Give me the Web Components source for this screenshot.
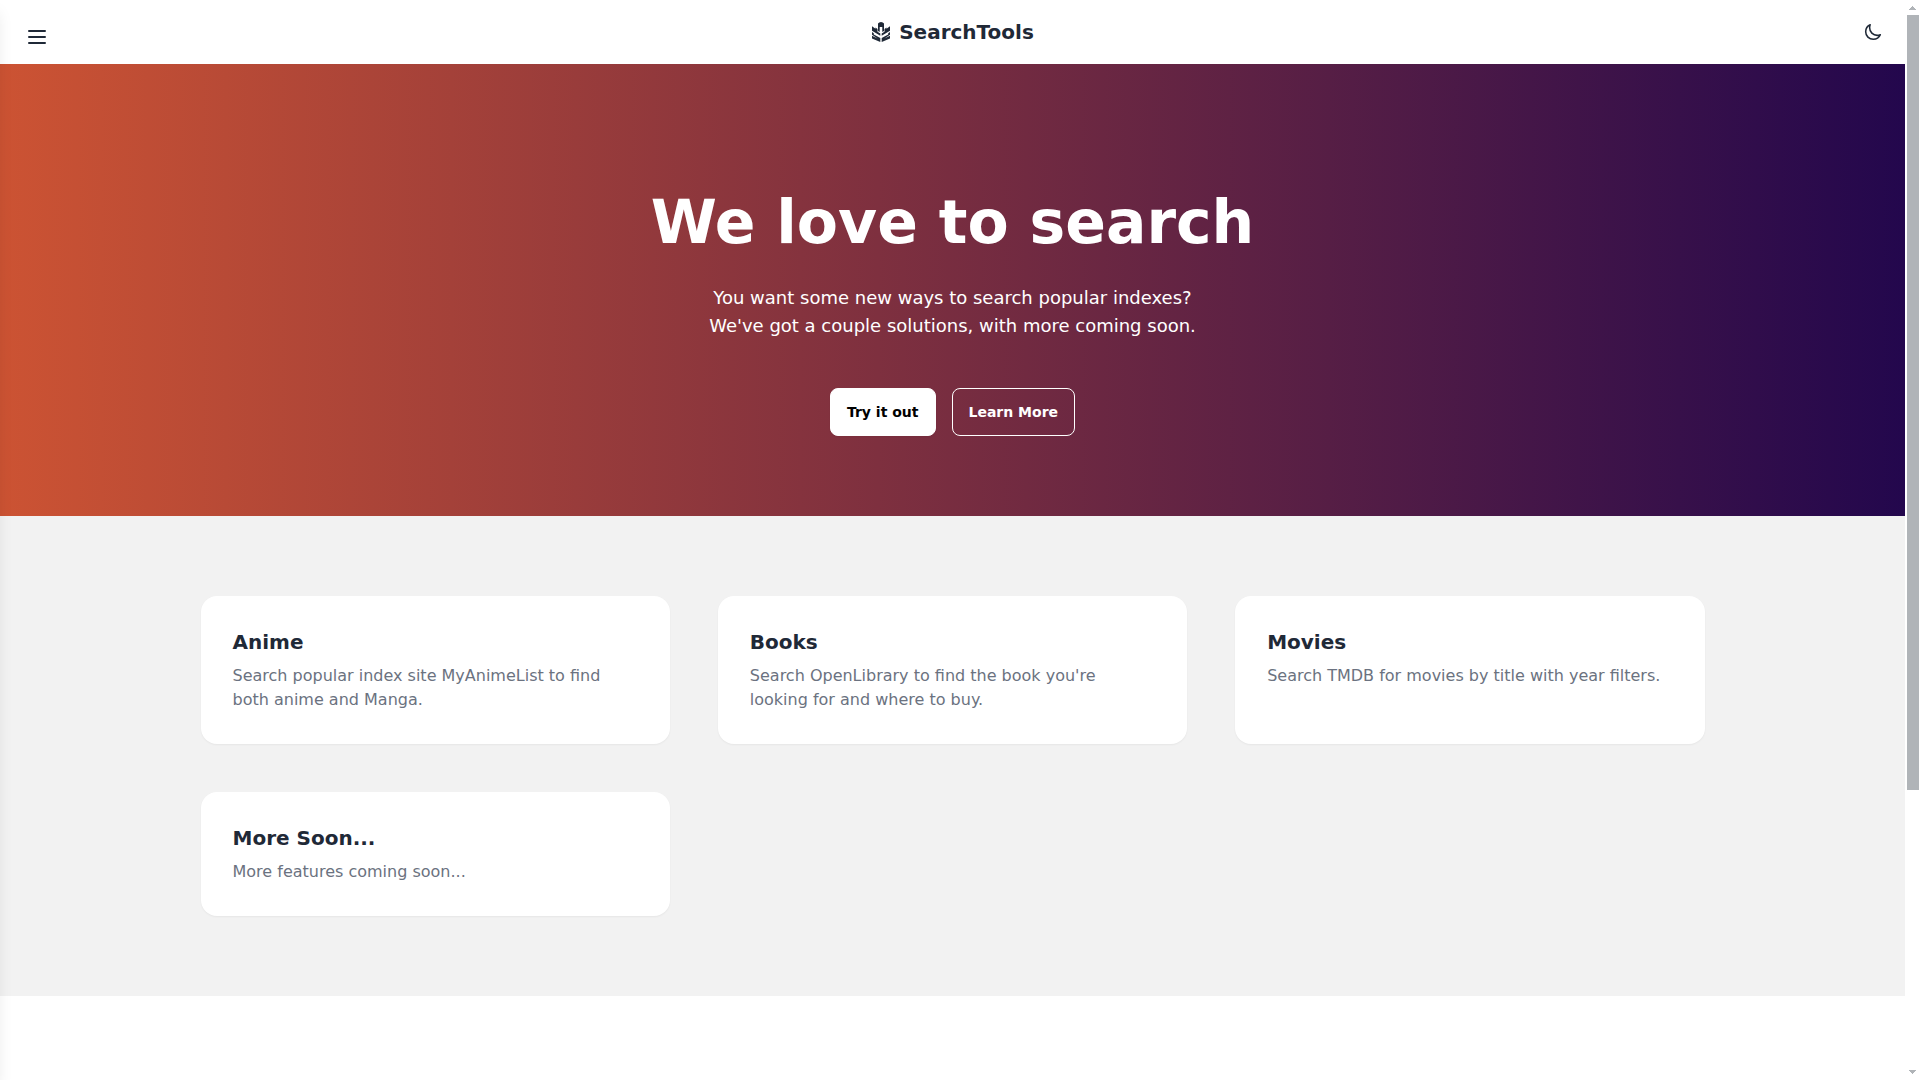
<!DOCTYPE html>
<html lang="en">
<head>
  <meta charset="utf-8">
  <title>SearchTools</title>
  <style>
    html {
      scrollbar-width: none;
    }

    body {
      margin: 0;
      background: #fff;
      color: #1f2937;
      font-family: "DejaVu Sans", sans-serif;
      font-size: 16px;
      line-height: 24px;
    }
  </style>
</head>
<body>
  <app-shell>
    <site-header>SearchTools</site-header>
    <main>
      <hero-banner>
        <span slot="title">We love to search</span>
        <span slot="lead">You want some new ways to search popular indexes?<br>We've got a couple solutions, with more coming soon.</span>
        <link-button slot="actions" href="#try" variant="solid">Try it out</link-button>
        <link-button slot="actions" href="#more">Learn More</link-button>
      </hero-banner>
      <feature-grid>
        <feature-card heading="Anime">Search popular index site MyAnimeList to find both anime and Manga.</feature-card>
        <feature-card heading="Books">Search OpenLibrary to find the book you're looking for and where to buy.</feature-card>
        <feature-card heading="Movies">Search TMDB for movies by title with year filters.</feature-card>
        <feature-card heading="More Soon...">More features coming soon...</feature-card>
      </feature-grid>
    </main>
  </app-shell>

  <script>
    class AppShell extends HTMLElement {
      connectedCallback() {
        this.attachShadow({ mode: 'open' });
        this.shadowRoot.innerHTML = `
          <style>
            :host {
              display: grid;
              grid-template-columns: minmax(0, 1fr) 15px;
              height: 100vh;
              overflow: hidden;
            }

            .page {
              overflow: hidden;
            }

            /* closed drawer, only its shadow reaches the page */
            .drawer {
              position: fixed;
              top: 0;
              bottom: 0;
              left: -256px;
              width: 256px;
              box-shadow: 0 10px 15px -3px rgba(0, 0, 0, 0.1), 0 4px 6px -4px rgba(0, 0, 0, 0.1);
              pointer-events: none;
            }
          </style>
          <div class="page"><slot></slot></div>
          <scroll-rail></scroll-rail>
          <div class="drawer"></div>
        `;
      }
    }

    class ScrollRail extends HTMLElement {
      connectedCallback() {
        this.attachShadow({ mode: 'open' });
        this.shadowRoot.innerHTML = `
          <style>
            :host {
              display: grid;
              grid-template-rows: 15px minmax(0, 1fr) 15px;
              padding: 0 1px 0 2px;
              box-sizing: border-box;
              background: #fff;
            }

            .thumb {
              height: 73.8%;
              background: #b0b4b8;
            }

            svg {
              display: block;
              width: 12px;
              height: 15px;
              fill: #b0b4b8;
            }
          </style>
          <svg viewBox="0 0 12 15"><path d="M5 6h1v1h1v1h1v1h1v1H2V9h1V8h1V7h1z"/></svg>
          <div><div class="thumb"></div></div>
          <svg viewBox="0 0 12 15"><path d="M2 5h7v1H8v1H7v1H6v1H5V8H4V7H3V6H2z"/></svg>
        `;
      }
    }

    class SiteHeader extends HTMLElement {
      connectedCallback() {
        this.attachShadow({ mode: 'open' });
        this.shadowRoot.innerHTML = `
          <style>
            :host {
              display: block;
            }

            header {
              display: grid;
              grid-template-columns: 1fr auto 1fr;
              align-items: center;
              height: 64px;
              padding: 0 8px;
              box-sizing: border-box;
              background: #fff;
            }

            button {
              display: flex;
              align-items: center;
              justify-content: center;
              width: 48px;
              height: 48px;
              padding: 0;
              border: 0;
              background: none;
              color: inherit;
              cursor: pointer;
            }

            .menu {
              width: 58px;
              padding-top: 10px;
            }

            .theme {
              justify-self: end;
            }

            a {
              display: flex;
              align-items: center;
              gap: 8px;
              color: inherit;
              font-size: 20px;
              line-height: 28px;
              font-weight: 700;
              text-decoration: none;
            }

            svg {
              display: block;
            }
          </style>
          <header>
            <button class="menu" aria-label="Open menu">
              <svg width="24" height="24" viewBox="0 0 24 24" fill="none" stroke="currentColor" stroke-width="2" stroke-linecap="round">
                <path d="M4 6h16M4 12h16M4 18h16"/>
              </svg>
            </button>
            <a href="#home">
              <svg width="20" height="20" viewBox="0 0 20 20" fill="currentColor">
                <path d="M7 9V1.500Q8 0 10 0t3 1.500V9l-1.700 1V5H8.700v5z"/>
                <path d="M1 4.200l3.500 2.600V5.500L6.500 7v2.700l2.800 1.800v2.300L1 8.800z"/>
                <path d="M19 4.200l-3.500 2.600V5.500L13.500 7v2.700l-2.800 1.800v2.300L19 8.800z"/>
                <path d="M1 10l1.800 1.200v1.300l6.500 3.600V20L1 16.500v-2.800l5.500 2.800-5.500-3.800z"/>
                <path d="M19 10l-1.800 1.200v1.300l-6.500 3.600V20l8.300-3.500v-2.800l-5.500 2.800 5.500-3.800z"/>
              </svg>
              <slot></slot>
            </a>
            <button class="theme" aria-label="Toggle dark mode">
              <svg width="18" height="18" viewBox="0 0 512 512" fill="none" stroke="currentColor" stroke-width="44" stroke-linecap="round" stroke-linejoin="round">
                <path d="M160 136c0-30.620 4.510-61.610 16-88C99.570 81.270 48 159.320 48 248c0 119.290 96.710 216 216 216 88.680 0 166.730-51.570 200-128-26.390 11.490-57.380 16-88 16-119.290 0-216-96.710-216-216z"/>
              </svg>
            </button>
          </header>
        `;
      }
    }

    class HeroBanner extends HTMLElement {
      connectedCallback() {
        this.attachShadow({ mode: 'open' });
        this.shadowRoot.innerHTML = `
          <style>
            :host {
              display: block;
              padding: 128px 16px 80px;
              background: linear-gradient(to right, #cc5333, #23074d);
              color: #fff;
              text-align: center;
            }

            h1 {
              margin: 0 0 32px;
              font-size: 60px;
              line-height: 60px;
              font-weight: 700;
            }

            p {
              margin: 0 0 48px;
              font-size: 18px;
              line-height: 28px;
            }

            .actions {
              display: flex;
              justify-content: center;
              gap: 16px;
            }
          </style>
          <section>
            <h1><slot name="title"></slot></h1>
            <p><slot name="lead"></slot></p>
            <div class="actions"><slot name="actions"></slot></div>
          </section>
        `;
      }
    }

    class LinkButton extends HTMLElement {
      connectedCallback() {
        this.attachShadow({ mode: 'open' });
        this.shadowRoot.innerHTML = `
          <style>
            :host {
              display: block;
            }

            a {
              display: flex;
              align-items: center;
              height: 48px;
              padding: 0 16px;
              box-sizing: border-box;
              border: 1px solid #fff;
              border-radius: 8px;
              color: #fff;
              font-size: 14px;
              line-height: 20px;
              font-weight: 600;
              text-decoration: none;
            }

            :host([variant="solid"]) a {
              background: #fff;
              color: #000;
              box-shadow: 0 1px 2px rgba(0, 0, 0, 0.05);
            }
          </style>
          <a href="${this.getAttribute('href')}"><slot></slot></a>
        `;
      }
    }

    class FeatureGrid extends HTMLElement {
      connectedCallback() {
        this.attachShadow({ mode: 'open' });
        this.shadowRoot.innerHTML = `
          <style>
            :host {
              display: block;
              padding: 80px 16px;
              background: #f2f2f2;
            }

            .grid {
              display: grid;
              grid-template-columns: repeat(3, minmax(0, 1fr));
              gap: 48px;
              max-width: 1504px;
              margin: 0 auto;
            }

            @media (max-width: 900px) {
              .grid {
                grid-template-columns: 1fr;
              }
            }
          </style>
          <div class="grid"><slot></slot></div>
        `;
      }
    }

    class FeatureCard extends HTMLElement {
      connectedCallback() {
        this.attachShadow({ mode: 'open' });
        this.shadowRoot.innerHTML = `
          <style>
            :host {
              display: block;
              padding: 32px;
              border-radius: 16px;
              background: #fff;
              box-shadow: 0 1px 2px rgba(0, 0, 0, 0.05);
            }

            h2 {
              margin: 0 0 8px;
              font-size: 20px;
              line-height: 28px;
              font-weight: 600;
            }

            p {
              margin: 0;
              color: #6b7280;
            }
          </style>
          <h2>${this.getAttribute('heading')}</h2>
          <p><slot></slot></p>
        `;
      }
    }

    customElements.define('app-shell', AppShell);
    customElements.define('scroll-rail', ScrollRail);
    customElements.define('site-header', SiteHeader);
    customElements.define('hero-banner', HeroBanner);
    customElements.define('link-button', LinkButton);
    customElements.define('feature-grid', FeatureGrid);
    customElements.define('feature-card', FeatureCard);
  </script>
</body>
</html>
